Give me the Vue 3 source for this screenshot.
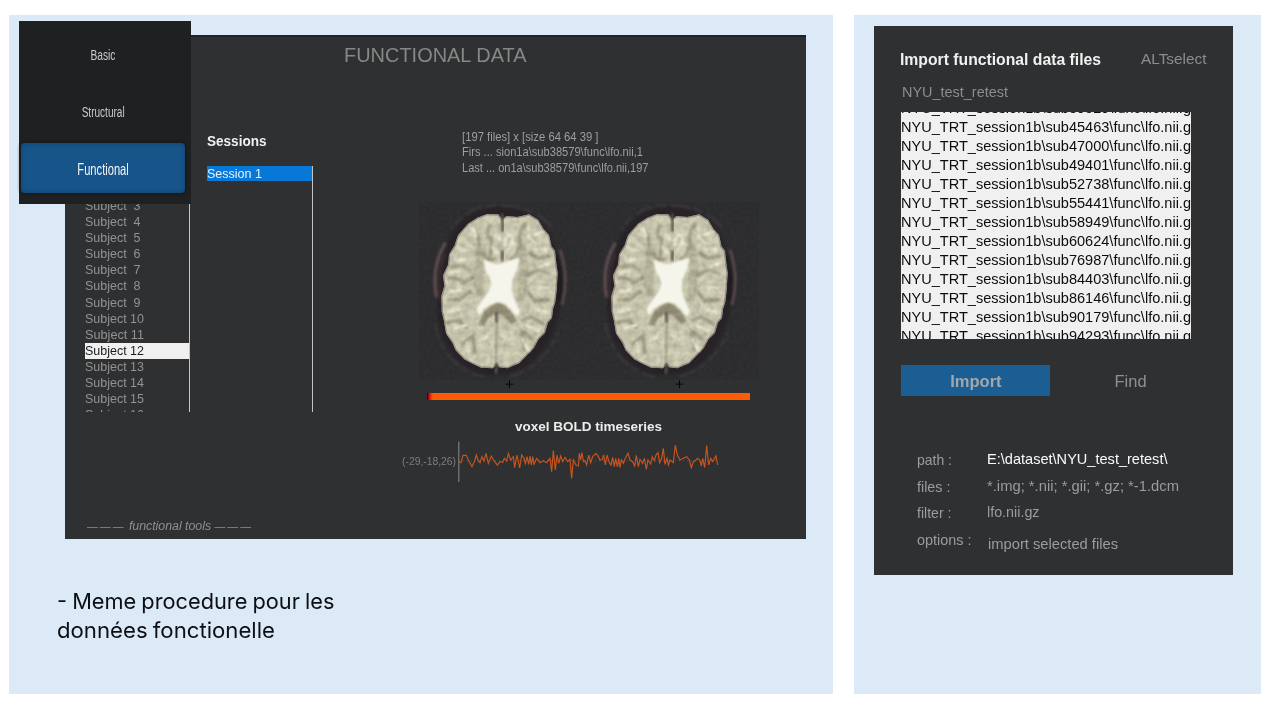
<script setup>
const menu = [
  { label: 'Basic', width: 25 },
  { label: 'Structural', width: 43 },
  { label: 'Functional', width: 51.5, active: true },
]

const subjects = Array.from({ length: 14 }, (_, i) => ({
  id: i + 3,
  label: 'Subject ' + String(i + 3).padStart(2, ' '),
  width: i + 3 < 10 ? 55.5 : 59,
}))

const scanInfo = [
  { text: '[197 files] x [size 64 64 39 ]', width: 136.5 },
  { text: 'Firs ... sion1a\\sub38579\\func\\lfo.nii,1', width: 181 },
  { text: 'Last ... on1a\\sub38579\\func\\lfo.nii,197', width: 186.5 },
]

const files = ['39529', '45463', '47000', '49401', '52738', '55441', '58949', '60624', '76987', '84403', '86146', '90179', '94293']
  .map((id) => `NYU_TRT_session1b\\sub${id}\\func\\lfo.nii.g`)

const fields = [
  { key: 'path :', kw: 35, value: 'E:\\dataset\\NYU_test_retest\\', vw: 180.5 },
  { key: 'files :', kw: 33.5, value: '*.img; *.nii; *.gii; *.gz; *-1.dcm', vw: 192 },
  { key: 'filter :', kw: 34.5, value: 'lfo.nii.gz', vw: 52.5 },
  { key: 'options :', kw: 54.5, value: 'import selected files', vw: 130 },
]

const signal =
  '207,155 213,158 219,136 229,136 235,150 246,170 253,155 259,135 265,153 270,158 276,140 282,153 288,130 295,160 304,138 312,152 322,165 330,155 338,157 343,145 350,153 355,130 362,150 370,140 374,173 381,135 389,174 395,135 402,145 406,160 411,140 416,163 420,138 424,165 428,140 432,163 440,145 450,158 460,152 470,158 480,145 485,185 490,122 496,180 501,135 506,160 512,138 518,155 525,142 533,155 540,148 545,205 550,150 558,165 565,168 568,130 572,150 576,128 580,155 585,152 590,165 596,135 602,158 608,140 618,130 625,140 630,150 637,148 641,135 646,165 651,135 658,158 663,165 668,142 673,170 677,145 682,170 686,145 690,172 694,150 700,160 706,145 714,130 720,150 728,155 734,168 739,136 745,170 750,148 758,160 763,145 769,178 774,150 782,162 787,140 793,152 798,135 804,128 809,158 815,145 820,115 825,163 831,145 835,165 840,150 850,158 856,105 862,135 870,150 880,145 890,140 898,150 904,173 910,155 918,150 923,145 930,152 934,168 938,145 944,172 950,107 956,165 962,145 968,155 978,138 983,165'

// Squeezes or stretches a label horizontally to a given width in pixels.
const vFit = {
  mounted(el, { value }) {
    const natural = el.getBoundingClientRect().width
    if (natural) el.style.transform = `scaleX(${value / natural})`
  },
}
</script>

<template>
  <main class="page">
    <section class="card card-left">
      <div class="window">
        <header class="window-title"><span v-fit="182.5" class="fit">FUNCTIONAL DATA</span></header>

        <div class="columns">
          <ul class="subjects">
            <li v-for="s in subjects" :key="s.id" :class="{ selected: s.id === 12 }">
              <span v-fit="s.width" class="fit">{{ s.label }}</span>
            </li>
          </ul>

          <div class="sessions">
            <h2><span v-fit="59.5" class="fit">Sessions</span></h2>
            <div class="session-list">
              <div class="session"><span v-fit="55" class="fit">Session 1</span></div>
            </div>
          </div>

          <div class="scan">
            <div class="scan-info">
              <div v-for="line in scanInfo" :key="line.text"><span v-fit="line.width" class="fit">{{ line.text }}</span></div>
            </div>

            <svg class="brains" viewBox="-24 30 1080 630">
              <defs>
                <filter id="tissue" x="-5%" y="-5%" width="110%" height="110%" color-interpolation-filters="sRGB">
                  <feTurbulence type="fractalNoise" baseFrequency="0.05" numOctaves="2" seed="8" result="n" />
                  <feColorMatrix in="n" type="matrix" values="0.26 0 0 0 0.81  0.26 0 0 0 0.81  0.26 0 0 0 0.80  0 0 0 0 1" result="g" />
                  <feBlend in="SourceGraphic" in2="g" mode="multiply" result="m" />
                  <feComposite in="m" in2="SourceGraphic" operator="in" result="c" />
                  <feGaussianBlur in="c" stdDeviation="1.8" />
                </filter>
                <filter id="rough" x="-10%" y="-10%" width="120%" height="120%" color-interpolation-filters="sRGB">
                  <feTurbulence type="fractalNoise" baseFrequency="0.09" numOctaves="2" seed="3" result="n" />
                  <feDisplacementMap in="SourceGraphic" in2="n" scale="6" xChannelSelector="R" yChannelSelector="G" result="d" />
                  <feGaussianBlur in="d" stdDeviation="2.6" />
                </filter>
                <filter id="halo" x="-10%" y="-10%" width="120%" height="120%"><feGaussianBlur stdDeviation="5" /></filter>
                <filter id="soft" x="-20%" y="-20%" width="140%" height="140%"><feGaussianBlur stdDeviation="3" /></filter>
                <filter id="noise" x="0" y="0" width="100%" height="100%" color-interpolation-filters="sRGB">
                  <feTurbulence type="fractalNoise" baseFrequency="0.1" numOctaves="2" seed="5" />
                  <feColorMatrix type="matrix" values="0.1 0 0 0 0.12  0.08 0 0 0 0.125  0.09 0 0 0 0.13  0 0 0 0 1" />
                </filter>
                <symbol id="brain" viewBox="0 0 540 600" overflow="visible">
                  <path filter="url(#halo)" fill="#252426" d="M262 52C340 50 395 82 422 140C462 235 472 320 436 408C408 496 345 552 262 556C185 556 120 510 92 425C72 340 80 245 113 160C140 90 194 54 262 52Z" />
                  <g fill="none" filter="url(#rough)">
                    <path d="M80 322C68 260 78 205 106 158" stroke="#5f4c4f" stroke-width="10" />
                    <path d="M94 340C84 290 88 235 106 190" stroke="#3c3033" stroke-width="6" />
                    <path d="M450 180C468 230 472 285 456 345" stroke="#5c494d" stroke-width="8" />
                    <path d="M436 190C452 230 456 280 446 330" stroke="#1d1b1d" stroke-width="8" />
                    <path d="M425 112C385 62 325 44 250 46C190 50 150 75 125 120" stroke="#423b3f" stroke-width="5" stroke-dasharray="60 14 30 8" />
                    <path d="M76 400C88 490 150 545 225 562M300 560C370 540 420 490 444 425" stroke="#423a3e" stroke-width="5" stroke-dasharray="50 10 24 12" />
                  </g>
                  <g filter="url(#tissue)">
                    <path fill="#d3d1b9" stroke="#a0978c" stroke-width="4" d="M176 102L204 84L232 74L264 75L277 90L290 80L322 83L357 75L383 91L400 120L415 135L423 170L433 183L437 220L441 248L438 300L434 335L427 357L424 383L412 397L403 428L384 446L370 473L345 499L326 518L292 533L268 530L260 520L248 533L214 531L187 519L164 506L139 480L129 458L110 430L104 393L97 364L96 318L105 288L101 255L116 225L119 194L136 166L146 136Z" />
                    <g fill="none" stroke="#aaa791" stroke-width="11" stroke-linecap="round" filter="url(#soft)">
                      <path d="M196 125Q214 155 204 190M239 110Q222 130 246 150L242 199M345 102Q317 135 337 174M123 230L155 226L177 238M119 264Q148 262 158 280L189 263M420 198L382 204L360 190M416 250L385 241L350 257M115 330L152 328L181 305M112 399L145 390L169 412M414 330L373 333L356 309M400 403L365 381L336 390M159 460L188 438L195 488M365 445L336 425L343 481" />
                      <path d="M214 188Q235 218 253 207M303 209Q326 190 330 164" />
                    </g>
                    <g fill="none" stroke="#b2af98" stroke-width="26" stroke-linecap="round" filter="url(#soft)" opacity="0.6">
                      <path d="M212 180Q200 250 210 310M338 180Q345 260 335 320" />
                    </g>
                    <g fill="none" stroke="#f0efda" stroke-width="8" stroke-linecap="round" filter="url(#soft)">
                      <path d="M148 174L174 184M136 207L165 211M122 247L150 243M120 304L151 301M114 364L150 359M134 416L170 404M171 459L178 492M356 114Q352 143 375 158M371 134L399 126M375 178L408 180M389 230L422 219M367 291L416 293M364 353L407 366M350 407L386 423M337 447L357 481M249 172L267 192M293 125L285 166M309 148L290 187M211 451L231 438M274 436L299 449" />
                      <path d="M255 140Q262 120 270 150M292 135Q316 140 310 165M182 112Q198 125 198 140" />
                    </g>
                    <path fill="#9a947d" filter="url(#soft)" d="M205 405Q220 352 263 336Q306 352 320 396L303 403Q288 376 263 373Q236 375 221 408Z" />
                  </g>
                  <path fill="#f6f5ec" filter="url(#rough)" d="M222 210L245 218L267 223L295 213L328 204L322 238L308 267L305 301L312 323L330 364L322 380L302 358L286 341L263 336L241 344L221 357L206 378L200 356L217 331L237 301L244 281L237 258L226 242Z" />
                  <g fill="none" stroke="#565348" stroke-linecap="round" filter="url(#soft)">
                    <path d="M277 74L278 122M259 522L258 548" stroke-width="8" />
                    <path d="M259 368L260 396M277 184L277 210" stroke-width="8" />
                    <path d="M260 405L258 519" stroke-width="4" stroke="#8b8570" />
                  </g>
                </symbol>
                <linearGradient id="bar">
                  <stop offset="0" stop-color="#140000" />
                  <stop offset="0.005" stop-color="#e00016" />
                  <stop offset="0.017" stop-color="#ff5a05" />
                  <stop offset="1" stop-color="#ff5a05" />
                </linearGradient>
              </defs>
              <rect x="27" y="36" width="1020" height="534" filter="url(#noise)" opacity="0.4" />
              <use href="#brain" x="0" y="0" width="540" height="600" />
              <use href="#brain" x="510" y="0" width="540" height="600" />
              <path d="M287 582.5h23M298.5 571v23M797 582.5h23M808.5 571v23" stroke="#050505" stroke-width="3" />
              <rect x="52" y="609" width="968" height="21" fill="url(#bar)" />
            </svg>

            <h3><span v-fit="147" class="fit">voxel BOLD timeseries</span></h3>

            <div class="plot">
              <span class="coords"><span v-fit="54" class="fit">(-29,-18,26)</span></span>
              <svg class="signal" viewBox="204 93 786 126">
                <path d="M206.5 95V216" stroke="#8b8c8c" stroke-width="3" />
                <path d="M207 152.5H983" stroke="#746157" stroke-width="2" stroke-dasharray="3 9" />
                <polyline :points="signal" fill="none" stroke="#c8541f" stroke-width="3.5" />
              </svg>
            </div>
          </div>
        </div>

        <footer class="tools"><span v-fit="166" class="fit"><span class="dashes">———</span> functional tools <span class="dashes">———</span></span></footer>
      </div>

      <nav class="menu">
        <div v-for="m in menu" :key="m.label" class="menu-item" :class="{ active: m.active }">
          <span v-fit="m.width" class="fit centered">{{ m.label }}</span>
        </div>
      </nav>

      <p class="note">
        <span v-fit="277.5" class="fit">- Meme procedure pour les</span><br />
        <span v-fit="218" class="fit">données fonctionelle</span>
      </p>
    </section>

    <section class="card card-right">
      <div class="dialog">
        <header class="dialog-head">
          <h1><span v-fit="201" class="fit">Import functional data files</span></h1>
          <span class="alt"><span v-fit="65.5" class="fit">ALTselect</span></span>
        </header>
        <div class="folder"><span v-fit="106" class="fit">NYU_test_retest</span></div>
        <div class="files">
          <div v-for="f in files" :key="f" class="file"><span v-fit="290" class="fit">{{ f }}</span></div>
        </div>
        <div class="actions">
          <div class="btn primary"><span v-fit="51.5" class="fit centered">Import</span></div>
          <div class="btn"><span v-fit="32" class="fit centered">Find</span></div>
        </div>
        <dl class="fields">
          <template v-for="f in fields" :key="f.key">
            <dt><span v-fit="f.kw" class="fit">{{ f.key }}</span></dt>
            <dd><span v-fit="f.vw" class="fit">{{ f.value }}</span></dd>
          </template>
        </dl>
      </div>
    </section>
  </main>
</template>

<style>
body {
  background: #fff;
}
</style>

<style scoped>
.page {
  box-sizing: border-box;
  width: 1280px;
  height: 720px;
  padding: 15px 19px 26px 9px;
  display: flex;
  gap: 21px;
  overflow: hidden;
  font-family: "Liberation Sans", Arial, sans-serif;
  color: #9b9c9c;
}
h1, h2, h3, p, ul, dl, dd {
  margin: 0;
  padding: 0;
}
.fit {
  display: inline-block;
  white-space: pre;
  transform-origin: 0 50%;
}
.fit.centered {
  transform-origin: 50% 50%;
}
.card {
  box-sizing: border-box;
  background: #dce9f6;
  height: 679px;
}
.card-left {
  position: relative;
  width: 824px;
  padding: 20px 0 0 56px;
}
.card-right {
  width: 407px;
  padding: 11px 0 0 20px;
}

.window {
  box-sizing: border-box;
  width: 741px;
  height: 504px;
  background: #2f3031;
  border-top: 2px solid #1e2429;
  display: flex;
  flex-direction: column;
}
.window-title {
  height: 38px;
  line-height: 36px;
  padding-left: 279px;
  font-size: 20.5px;
  color: #868787;
}
.columns {
  flex: 1;
  display: grid;
  grid-template-columns: 105px 106px 360px;
  padding-left: 20px;
}
.subjects {
  box-sizing: border-box;
  list-style: none;
  margin-top: 123px;
  height: 214px;
  overflow: hidden;
  border-right: 1px solid #c4c5c5;
  font-size: 13px;
}
.subjects li {
  height: 16.1px;
  line-height: 16px;
  color: #929393;
}
.subjects li.selected {
  background: #f0f0f0;
  color: #1c1c1c;
}
.sessions {
  margin: 56px 0 0 17px;
  width: 106px;
}
.sessions h2 {
  font-size: 14px;
  line-height: 20px;
  color: #f0f0f0;
}
.session-list {
  box-sizing: border-box;
  margin-top: 15px;
  height: 246px;
  border-right: 1px solid #c4c5c5;
}
.session {
  height: 15px;
  line-height: 15px;
  font-size: 13px;
  background: #0878d8;
  color: #e8f2fb;
}
.scan {
  margin-left: 106px;
  width: 360px;
}
.scan-info {
  margin-top: 55px;
  padding-left: 59.5px;
  font-size: 12px;
  line-height: 15.33px;
  height: 70px;
  color: #9d9e9e;
}
.brains {
  display: block;
  width: 360px;
  height: 210px;
}
.scan h3 {
  margin-top: 7px;
  padding-left: 113px;
  height: 20px;
  line-height: 20px;
  font-size: 13.5px;
  color: #ececec;
}
.plot {
  display: flex;
  margin-top: 4px;
}
.coords {
  width: 56px;
  line-height: 41px;
  font-size: 11px;
  color: #7d7e7e;
}
.signal {
  width: 262px;
  height: 42px;
}
.tools {
  height: 23px;
  line-height: 20px;
  padding-left: 22px;
  font-size: 12.5px;
  font-style: italic;
  color: #8f9090;
}
.dashes {
  font-size: 11px;
  letter-spacing: 2px;
}

.menu {
  position: absolute;
  left: 10px;
  top: 6px;
  width: 172px;
  height: 183px;
  background: #1f2021;
}
.menu-item {
  height: 57px;
  width: 168px;
  line-height: 68px;
  text-align: center;
  font-size: 15.5px;
  color: #c9caca;
}
.menu-item.active {
  box-sizing: border-box;
  margin: 8px 0 0 2px;
  width: 164px;
  height: 50px;
  line-height: 53px;
  font-size: 16.5px;
  border-radius: 4px;
  background: #17548a;
  box-shadow: inset 0 0 5px #14406a, 0 0 4px #111416;
  color: #f1f4f6;
}
.note {
  margin: 48px 0 0 -8px;
  font-family: Inter, "Open Sans", sans-serif;
  font-size: 22px;
  line-height: 29px;
  word-spacing: -1px;
  color: #0c0f14;
}

.dialog {
  box-sizing: border-box;
  width: 359px;
  height: 549px;
  background: #2f3031;
  padding: 22px 0 0 26px;
}
.dialog-head {
  display: flex;
  height: 22px;
  line-height: 22px;
}
.dialog-head h1 {
  width: 241px;
  font-size: 16px;
  line-height: 24px;
  color: #f0f0f0;
}
.alt {
  font-size: 15px;
  color: #8c8d8d;
}
.folder {
  margin: 12px 0 0 2px;
  height: 20px;
  line-height: 20px;
  font-size: 15px;
  color: #8c8d8d;
}
.files {
  margin: 10px 0 0 1px;
  width: 290px;
  height: 227px;
  overflow: hidden;
  background: #f0f0f0;
  color: #0c0c0c;
}
.file {
  height: 19px;
  line-height: 19px;
  font-size: 15px;
}
.file:first-child {
  margin-top: -14px;
}
.actions {
  display: flex;
  margin: 26px 0 0 1px;
  gap: 6px;
}
.btn {
  width: 149px;
  height: 31px;
  line-height: 33px;
  text-align: center;
  font-size: 16px;
  color: #8f9090;
}
.btn.primary {
  background: #1a5e94;
  color: #a2a8ab;
  font-weight: 700;
}
.fields {
  display: grid;
  grid-template-columns: 70px 220px;
  grid-auto-rows: 26.6px;
  margin: 51px 0 0 17px;
  font-size: 15px;
  line-height: 26px;
}
.fields dt {
  color: #9b9c9c;
}
.fields dd {
  margin-top: -1px;
}
.fields dd:nth-of-type(1) {
  color: #fafafa;
}
.fields dd:nth-of-type(4) {
  margin: 4px 0 0 1px;
}
</style>
